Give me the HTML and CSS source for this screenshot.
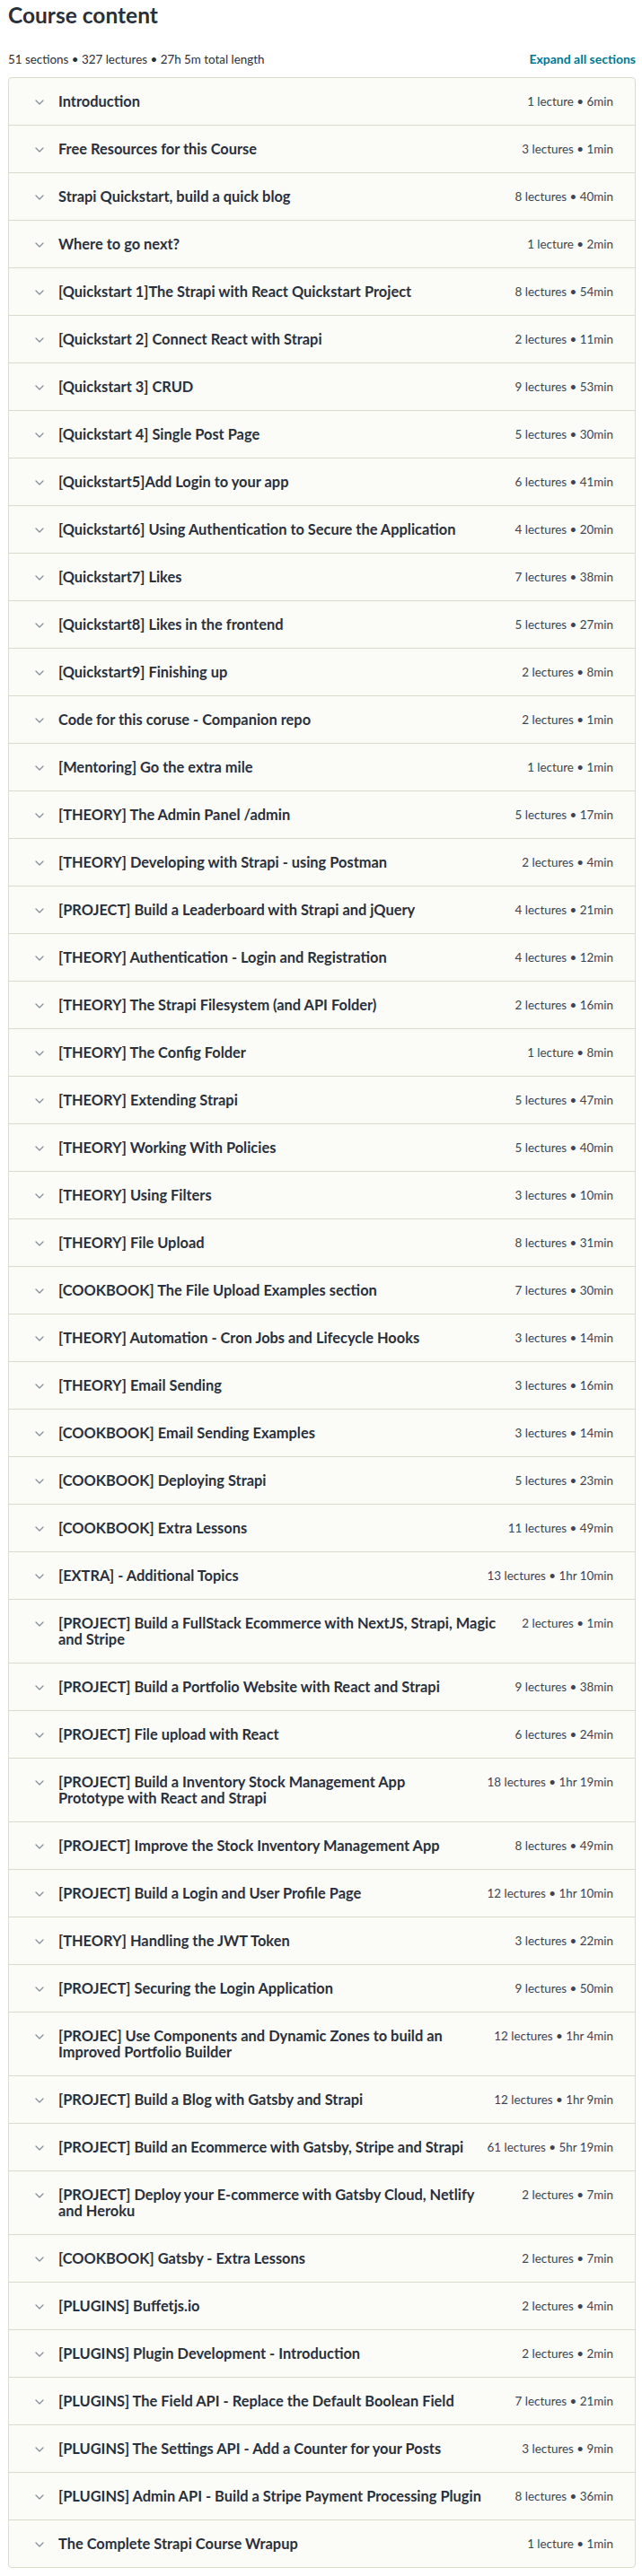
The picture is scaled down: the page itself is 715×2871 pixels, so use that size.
FILE: index.html
```html
<!DOCTYPE html>
<html lang="en">
<head>
<meta charset="utf-8">
<title>Course content</title>
<link rel="stylesheet" href="styles.css">
</head>
<body>
<div class="page">
  <h2 class="heading">Course content</h2>
  <div class="summary">
    <span class="summary-text">51 sections • 327 lectures • 27h 5m total length</span>
    <a class="expand" href="#">Expand all sections</a>
  </div>
  <div class="sections">
    <div class="section"><svg class="chev" viewBox="0 0 10 6"><polyline points="1,1 5,5 9,1"/></svg><span class="title">Introduction</span><span class="meta">1 lecture • 6min</span></div>
    <div class="section"><svg class="chev" viewBox="0 0 10 6"><polyline points="1,1 5,5 9,1"/></svg><span class="title">Free Resources for this Course</span><span class="meta">3 lectures • 1min</span></div>
    <div class="section"><svg class="chev" viewBox="0 0 10 6"><polyline points="1,1 5,5 9,1"/></svg><span class="title">Strapi Quickstart, build a quick blog</span><span class="meta">8 lectures • 40min</span></div>
    <div class="section"><svg class="chev" viewBox="0 0 10 6"><polyline points="1,1 5,5 9,1"/></svg><span class="title">Where to go next?</span><span class="meta">1 lecture • 2min</span></div>
    <div class="section"><svg class="chev" viewBox="0 0 10 6"><polyline points="1,1 5,5 9,1"/></svg><span class="title">[Quickstart 1]The Strapi with React Quickstart Project</span><span class="meta">8 lectures • 54min</span></div>
    <div class="section"><svg class="chev" viewBox="0 0 10 6"><polyline points="1,1 5,5 9,1"/></svg><span class="title">[Quickstart 2] Connect React with Strapi</span><span class="meta">2 lectures • 11min</span></div>
    <div class="section"><svg class="chev" viewBox="0 0 10 6"><polyline points="1,1 5,5 9,1"/></svg><span class="title">[Quickstart 3] CRUD</span><span class="meta">9 lectures • 53min</span></div>
    <div class="section"><svg class="chev" viewBox="0 0 10 6"><polyline points="1,1 5,5 9,1"/></svg><span class="title">[Quickstart 4] Single Post Page</span><span class="meta">5 lectures • 30min</span></div>
    <div class="section"><svg class="chev" viewBox="0 0 10 6"><polyline points="1,1 5,5 9,1"/></svg><span class="title">[Quickstart5]Add Login to your app</span><span class="meta">6 lectures • 41min</span></div>
    <div class="section"><svg class="chev" viewBox="0 0 10 6"><polyline points="1,1 5,5 9,1"/></svg><span class="title">[Quickstart6] Using Authentication to Secure the Application</span><span class="meta">4 lectures • 20min</span></div>
    <div class="section"><svg class="chev" viewBox="0 0 10 6"><polyline points="1,1 5,5 9,1"/></svg><span class="title">[Quickstart7] Likes</span><span class="meta">7 lectures • 38min</span></div>
    <div class="section"><svg class="chev" viewBox="0 0 10 6"><polyline points="1,1 5,5 9,1"/></svg><span class="title">[Quickstart8] Likes in the frontend</span><span class="meta">5 lectures • 27min</span></div>
    <div class="section"><svg class="chev" viewBox="0 0 10 6"><polyline points="1,1 5,5 9,1"/></svg><span class="title">[Quickstart9] Finishing up</span><span class="meta">2 lectures • 8min</span></div>
    <div class="section"><svg class="chev" viewBox="0 0 10 6"><polyline points="1,1 5,5 9,1"/></svg><span class="title">Code for this coruse - Companion repo</span><span class="meta">2 lectures • 1min</span></div>
    <div class="section"><svg class="chev" viewBox="0 0 10 6"><polyline points="1,1 5,5 9,1"/></svg><span class="title">[Mentoring] Go the extra mile</span><span class="meta">1 lecture • 1min</span></div>
    <div class="section"><svg class="chev" viewBox="0 0 10 6"><polyline points="1,1 5,5 9,1"/></svg><span class="title">[THEORY] The Admin Panel /admin</span><span class="meta">5 lectures • 17min</span></div>
    <div class="section"><svg class="chev" viewBox="0 0 10 6"><polyline points="1,1 5,5 9,1"/></svg><span class="title">[THEORY] Developing with Strapi - using Postman</span><span class="meta">2 lectures • 4min</span></div>
    <div class="section"><svg class="chev" viewBox="0 0 10 6"><polyline points="1,1 5,5 9,1"/></svg><span class="title">[PROJECT] Build a Leaderboard with Strapi and jQuery</span><span class="meta">4 lectures • 21min</span></div>
    <div class="section"><svg class="chev" viewBox="0 0 10 6"><polyline points="1,1 5,5 9,1"/></svg><span class="title">[THEORY] Authentication - Login and Registration</span><span class="meta">4 lectures • 12min</span></div>
    <div class="section"><svg class="chev" viewBox="0 0 10 6"><polyline points="1,1 5,5 9,1"/></svg><span class="title">[THEORY] The Strapi Filesystem (and API Folder)</span><span class="meta">2 lectures • 16min</span></div>
    <div class="section"><svg class="chev" viewBox="0 0 10 6"><polyline points="1,1 5,5 9,1"/></svg><span class="title">[THEORY] The Config Folder</span><span class="meta">1 lecture • 8min</span></div>
    <div class="section"><svg class="chev" viewBox="0 0 10 6"><polyline points="1,1 5,5 9,1"/></svg><span class="title">[THEORY] Extending Strapi</span><span class="meta">5 lectures • 47min</span></div>
    <div class="section"><svg class="chev" viewBox="0 0 10 6"><polyline points="1,1 5,5 9,1"/></svg><span class="title">[THEORY] Working With Policies</span><span class="meta">5 lectures • 40min</span></div>
    <div class="section"><svg class="chev" viewBox="0 0 10 6"><polyline points="1,1 5,5 9,1"/></svg><span class="title">[THEORY] Using Filters</span><span class="meta">3 lectures • 10min</span></div>
    <div class="section"><svg class="chev" viewBox="0 0 10 6"><polyline points="1,1 5,5 9,1"/></svg><span class="title">[THEORY] File Upload</span><span class="meta">8 lectures • 31min</span></div>
    <div class="section"><svg class="chev" viewBox="0 0 10 6"><polyline points="1,1 5,5 9,1"/></svg><span class="title">[COOKBOOK] The File Upload Examples section</span><span class="meta">7 lectures • 30min</span></div>
    <div class="section"><svg class="chev" viewBox="0 0 10 6"><polyline points="1,1 5,5 9,1"/></svg><span class="title">[THEORY] Automation - Cron Jobs and Lifecycle Hooks</span><span class="meta">3 lectures • 14min</span></div>
    <div class="section"><svg class="chev" viewBox="0 0 10 6"><polyline points="1,1 5,5 9,1"/></svg><span class="title">[THEORY] Email Sending</span><span class="meta">3 lectures • 16min</span></div>
    <div class="section"><svg class="chev" viewBox="0 0 10 6"><polyline points="1,1 5,5 9,1"/></svg><span class="title">[COOKBOOK] Email Sending Examples</span><span class="meta">3 lectures • 14min</span></div>
    <div class="section"><svg class="chev" viewBox="0 0 10 6"><polyline points="1,1 5,5 9,1"/></svg><span class="title">[COOKBOOK] Deploying Strapi</span><span class="meta">5 lectures • 23min</span></div>
    <div class="section"><svg class="chev" viewBox="0 0 10 6"><polyline points="1,1 5,5 9,1"/></svg><span class="title">[COOKBOOK] Extra Lessons</span><span class="meta">11 lectures • 49min</span></div>
    <div class="section"><svg class="chev" viewBox="0 0 10 6"><polyline points="1,1 5,5 9,1"/></svg><span class="title">[EXTRA] - Additional Topics</span><span class="meta">13 lectures • 1hr 10min</span></div>
    <div class="section"><svg class="chev" viewBox="0 0 10 6"><polyline points="1,1 5,5 9,1"/></svg><span class="title">[PROJECT] Build a FullStack Ecommerce with NextJS, Strapi, Magic<br>and Stripe</span><span class="meta">2 lectures • 1min</span></div>
    <div class="section"><svg class="chev" viewBox="0 0 10 6"><polyline points="1,1 5,5 9,1"/></svg><span class="title">[PROJECT] Build a Portfolio Website with React and Strapi</span><span class="meta">9 lectures • 38min</span></div>
    <div class="section"><svg class="chev" viewBox="0 0 10 6"><polyline points="1,1 5,5 9,1"/></svg><span class="title">[PROJECT] File upload with React</span><span class="meta">6 lectures • 24min</span></div>
    <div class="section"><svg class="chev" viewBox="0 0 10 6"><polyline points="1,1 5,5 9,1"/></svg><span class="title">[PROJECT] Build a Inventory Stock Management App<br>Prototype with React and Strapi</span><span class="meta">18 lectures • 1hr 19min</span></div>
    <div class="section"><svg class="chev" viewBox="0 0 10 6"><polyline points="1,1 5,5 9,1"/></svg><span class="title">[PROJECT] Improve the Stock Inventory Management App</span><span class="meta">8 lectures • 49min</span></div>
    <div class="section"><svg class="chev" viewBox="0 0 10 6"><polyline points="1,1 5,5 9,1"/></svg><span class="title">[PROJECT] Build a Login and User Profile Page</span><span class="meta">12 lectures • 1hr 10min</span></div>
    <div class="section"><svg class="chev" viewBox="0 0 10 6"><polyline points="1,1 5,5 9,1"/></svg><span class="title">[THEORY] Handling the JWT Token</span><span class="meta">3 lectures • 22min</span></div>
    <div class="section"><svg class="chev" viewBox="0 0 10 6"><polyline points="1,1 5,5 9,1"/></svg><span class="title">[PROJECT] Securing the Login Application</span><span class="meta">9 lectures • 50min</span></div>
    <div class="section"><svg class="chev" viewBox="0 0 10 6"><polyline points="1,1 5,5 9,1"/></svg><span class="title">[PROJEC] Use Components and Dynamic Zones to build an<br>Improved Portfolio Builder</span><span class="meta">12 lectures • 1hr 4min</span></div>
    <div class="section"><svg class="chev" viewBox="0 0 10 6"><polyline points="1,1 5,5 9,1"/></svg><span class="title">[PROJECT] Build a Blog with Gatsby and Strapi</span><span class="meta">12 lectures • 1hr 9min</span></div>
    <div class="section"><svg class="chev" viewBox="0 0 10 6"><polyline points="1,1 5,5 9,1"/></svg><span class="title">[PROJECT] Build an Ecommerce with Gatsby, Stripe and Strapi</span><span class="meta">61 lectures • 5hr 19min</span></div>
    <div class="section"><svg class="chev" viewBox="0 0 10 6"><polyline points="1,1 5,5 9,1"/></svg><span class="title">[PROJECT] Deploy your E-commerce with Gatsby Cloud, Netlify<br>and Heroku</span><span class="meta">2 lectures • 7min</span></div>
    <div class="section"><svg class="chev" viewBox="0 0 10 6"><polyline points="1,1 5,5 9,1"/></svg><span class="title">[COOKBOOK] Gatsby - Extra Lessons</span><span class="meta">2 lectures • 7min</span></div>
    <div class="section"><svg class="chev" viewBox="0 0 10 6"><polyline points="1,1 5,5 9,1"/></svg><span class="title">[PLUGINS] Buffetjs.io</span><span class="meta">2 lectures • 4min</span></div>
    <div class="section"><svg class="chev" viewBox="0 0 10 6"><polyline points="1,1 5,5 9,1"/></svg><span class="title">[PLUGINS] Plugin Development - Introduction</span><span class="meta">2 lectures • 2min</span></div>
    <div class="section"><svg class="chev" viewBox="0 0 10 6"><polyline points="1,1 5,5 9,1"/></svg><span class="title">[PLUGINS] The Field API - Replace the Default Boolean Field</span><span class="meta">7 lectures • 21min</span></div>
    <div class="section"><svg class="chev" viewBox="0 0 10 6"><polyline points="1,1 5,5 9,1"/></svg><span class="title">[PLUGINS] The Settings API - Add a Counter for your Posts</span><span class="meta">3 lectures • 9min</span></div>
    <div class="section"><svg class="chev" viewBox="0 0 10 6"><polyline points="1,1 5,5 9,1"/></svg><span class="title">[PLUGINS] Admin API - Build a Stripe Payment Processing Plugin</span><span class="meta">8 lectures • 36min</span></div>
    <div class="section"><svg class="chev" viewBox="0 0 10 6"><polyline points="1,1 5,5 9,1"/></svg><span class="title">The Complete Strapi Course Wrapup</span><span class="meta">1 lecture • 1min</span></div>
  </div>
</div>
</body>
</html>
```
FILE: styles.css
```css
html, body {
  margin: 0;
  padding: 0;
  background: #ffffff;
}

body {
  font-family: Lato, "Liberation Sans", sans-serif;
  color: #29303b;
}

.page {
  padding: 0 7px 9px 9px;
}

.heading {
  margin: 0;
  padding-top: 2px;
  font-size: 24.5px;
  font-weight: 700;
  line-height: 30px;
  color: #29303b;
}

.summary {
  display: flex;
  justify-content: space-between;
  align-items: baseline;
  margin-top: 24px;
  margin-bottom: 10px;
  line-height: 20px;
}

.summary-text {
  font-size: 13.4px;
  color: #29303b;
}

.expand {
  font-size: 14px;
  font-weight: 700;
  color: #007791;
  text-decoration: none;
}

.sections {
  border: 1px solid #dcdacb;
  border-radius: 4px;
  background: #fbfbf8;
  overflow: hidden;
}

.section {
  display: flex;
  align-items: flex-start;
  padding: 17px 24px 17px 29px;
  border-bottom: 1px solid #dcdacb;
  line-height: 18px;
}

.section:last-child {
  border-bottom: none;
}

.chev {
  flex: 0 0 10px;
  width: 10px;
  height: 6px;
  margin-top: 7px;
  fill: none;
  stroke: #8a9099;
  stroke-width: 1.3;
  stroke-linecap: round;
  stroke-linejoin: round;
}

.title {
  flex: 1 1 auto;
  min-width: 0;
  margin-left: 16px;
  font-size: 16.4px;
  font-weight: 700;
  color: #29303b;
}

.meta {
  flex: 0 0 auto;
  margin-left: 16px;
  font-size: 13.4px;
  text-align: right;
  white-space: nowrap;
  color: #3e4450;
}
```
